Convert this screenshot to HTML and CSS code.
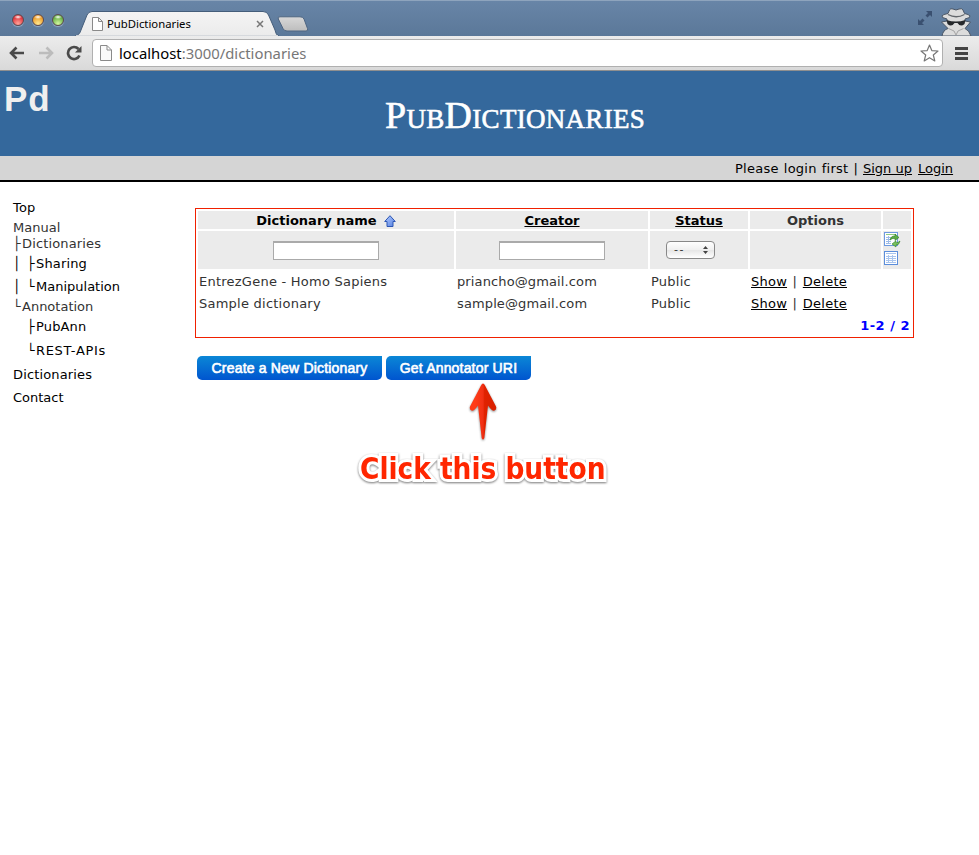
FILE: index.html
```html
<!DOCTYPE html>
<html lang="en">
<head>
<meta charset="utf-8">
<title>PubDictionaries</title>
<link rel="stylesheet" href="styles.css">
</head>
<body>
<div class="window">
  <div class="titlebar">
    <div class="lights"><i class="light red"></i><i class="light amber"></i><i class="light green"></i></div>
    <div class="tab">
      <svg class="tab-shape" width="204" height="25" viewBox="0 0 204 25">
        <defs><linearGradient id="tg" x1="0" y1="0" x2="0" y2="1"><stop offset="0" stop-color="#f4f4f4"/><stop offset="1" stop-color="#ebebeb"/></linearGradient></defs>
        <path d="M0 25C4 24 5 22 6 19L12 4Q13.500 .5 17 .5H188Q192 .5 193.500 4L200 19C201 22 201 24 204 25Z" fill="url(#tg)" stroke="#445d7a" stroke-width="1"/>
        <path d="M1 25H203" stroke="#ebebeb" stroke-width="1.500"/>
      </svg>
      <svg class="tab-page" width="11" height="14" viewBox="0 0 11 14"><path d="M.5.5H6.500L10.500 4.500V13.500H.5ZM6.500.5V4.500H10.500" fill="#fff" stroke="#8a8a8a"/></svg>
      <span class="tab-title">PubDictionaries</span>
      <svg class="tab-close" width="8" height="8" viewBox="0 0 8 8"><path d="M1 1L7 7M7 1L1 7" stroke="#777" stroke-width="1.500"/></svg>
    </div>
    <svg class="newtab" width="32" height="16" viewBox="0 0 32 16">
      <defs><linearGradient id="ng" x1="0" y1="0" x2="0" y2="1"><stop offset="0" stop-color="#d8d8d8"/><stop offset="1" stop-color="#bdbdbd"/></linearGradient></defs>
      <path d="M3 .8H23Q26 .8 27 3L30.500 12.500Q31.500 15 29 15H10Q7 15 6 12.500L1.300 3Q.5.8 3 .8Z" fill="url(#ng)" stroke="#4e6581"/>
    </svg>
    <div class="corner">
      <svg width="15" height="16" viewBox="0 0 15 16"><g fill="#3a5070"><path d="M8 1H14V7L12 5L9.500 7.500L7.500 5.500L10 3Z"/><path d="M0 9L2 11L4.500 8.500L6.500 10.500L4 13L6 15H0Z"/></g></svg>
      <svg class="spy" width="32" height="28" viewBox="0 0 32 28">
        <path d="M2 28Q3 22 8 20.500L1.500 14L7 13V11L2.500 9.500Q1 7.500 4 6.500L8 5.500L9.500 2Q10.500 0 13 1L16 2L19 1Q22 0 23 2L24.500 5.500L28 6.500Q31 7.500 29.500 9.500L25 11V13L30.500 14L25 20.500Q29 22 31 28Z" fill="#dcdcdc" stroke="#4a5666" stroke-width="1"/>
        <path d="M8 6.500Q16 11 24.500 6.500" fill="none" stroke="#63676c" stroke-width="1.300"/>
        <path d="M6.500 12Q16 15 25.500 12L24.500 16Q20.500 19.500 17.500 15H14.500Q11.500 19.500 7.500 16Z" fill="#25282b"/>
        <path d="M8.500 20.500L14 23L16 27L18 23L23.500 20.500" fill="none" stroke="#a4a4a4"/>
      </svg>
    </div>
  </div>
  <div class="toolbar">
    <svg class="back" width="16" height="14" viewBox="0 0 16 14"><path d="M7.500 1.500L2 7L7.500 12.500M2 7H15" fill="none" stroke="#4a4a4a" stroke-width="2.600"/></svg>
    <svg class="forward" width="16" height="14" viewBox="0 0 16 14"><path d="M8.500 1.500L14 7L8.500 12.500M14 7H1" fill="none" stroke="#bcbcbc" stroke-width="2.600"/></svg>
    <svg class="reload" width="16" height="16" viewBox="0 0 16 16"><path d="M12.500 4A6 6 0 1 0 13.500 10.500" fill="none" stroke="#4a4a4a" stroke-width="2.700"/><path d="M15.500 1V7.500H9Z" fill="#4a4a4a"/></svg>
    <div class="omnibox">
      <svg width="12" height="16" viewBox="0 0 12 16"><path d="M.5.5H7L11.500 5V15.500H.5ZM7 .5V5H11.500" fill="#fafafa" stroke="#8a8a8a"/></svg>
      <span class="url"><b>localhost</b>:3000/dictionaries</span>
      <svg class="star" width="19" height="18" viewBox="0 0 19 18"><path d="M9.500 1L11.800 6.600L18 7L13.300 11L14.800 16.900L9.500 13.700L4.200 16.900L5.700 11L1 7L7.200 6.600Z" fill="#fff" stroke="#777" stroke-width="1.200" stroke-linejoin="round"/></svg>
    </div>
    <svg class="menu" width="13" height="13" viewBox="0 0 13 13"><path d="M0 1.500H13M0 6.500H13M0 11.500H13" stroke="#444" stroke-width="2.800"/></svg>
  </div>
  <header class="banner">
    <span class="logo">Pd</span>
    <h1>PubDictionaries</h1>
  </header>
  <div class="loginbar"><span class="msg">Please login first |</span><a class="signup">Sign up</a><a class="login">Login</a></div>
  <div class="content">
    <ul class="nav">
      <li class="w2">Top</li>
      <li class="dim g4">Manual</li>
      <li class="dim w2"><i>├</i>Dictionaries</li>
      <li class="g4 w2"><i class="wide">│</i><i>├</i>Sharing</li>
      <li class="g7"><i class="wide">│</i><i>└</i>Manipulation</li>
      <li class="dim g4"><i>└</i>Annotation</li>
      <li class="g4 w2"><i class="wide"></i><i>├</i>PubAnn</li>
      <li class="g8 w6"><i class="wide"></i><i>└</i>REST-APIs</li>
      <li class="g8 w2">Dictionaries</li>
      <li class="g7">Contact</li>
    </ul>
    <main>
      <div class="frame">
      <table class="grid">
        <colgroup><col class="c1"><col class="c2"><col class="c3"><col class="c4"><col class="c5"></colgroup>
        <tr class="head">
          <th><span class="sorted">Dictionary name</span><svg class="up" width="12" height="12" viewBox="0 0 12 12"><defs><linearGradient id="ug" x1="0" y1="0" x2="1" y2="1"><stop offset="0" stop-color="#b4ccff"/><stop offset="1" stop-color="#5580e0"/></linearGradient></defs><path d="M6 .7L11.300 6.500H9V11.500H3V6.500H.7Z" fill="url(#ug)" stroke="#2c56b4" stroke-linejoin="round"/></svg></th>
          <th><a>Creator</a></th><th><a>Status</a></th><th>Options</th><th></th>
        </tr>
        <tr class="filter">
          <td><input type="text"></td>
          <td><input type="text"></td>
          <td><span class="select">--<svg width="5" height="8" viewBox="0 0 5 8"><path d="M0 3L2.500 0L5 3ZM0 5L2.500 8L5 5Z" fill="#444"/></svg></span></td>
          <td></td>
          <td><div class="tools">
            <svg width="17" height="16" viewBox="0 0 17 16"><rect x=".5" y=".5" width="13" height="13" fill="#fff" stroke="#6d9ae0"/><path d="M2 2.500H12" stroke="#8fca7e"/><path d="M2 5.500H9M2 7.500H7M2 9.500H7M2 11.500H7M4.500 4V12" stroke="#9dbbe8"/><path d="M6 8Q7 3.500 11 4V2L15 5.500L11 8.500V6.500Q8 6 6 8Z" fill="#5cab45" stroke="#2e7d27" stroke-width=".6"/><path d="M16 9Q15 13.500 12 13V15L8 12L12 8.800V10.800Q14 11 16 9Z" fill="#7ac15d" stroke="#2e7d27" stroke-width=".6"/></svg>
            <svg width="14" height="14" viewBox="0 0 14 14"><rect x=".5" y=".5" width="13" height="13" fill="#fff" stroke="#5c8edb"/><path d="M2 2.500H12" stroke="#a9c5ee"/><path d="M2 5.500H12M2 7.500H12M2 9.500H12M2 11.500H12M4.500 4V12M8.500 4V12" stroke="#a9c5ee"/></svg>
          </div></td>
        </tr>
        <tr><td>EntrezGene - Homo Sapiens</td><td class="mail">priancho@gmail.com</td><td>Public</td><td class="opts"><a>Show</a> | <a>Delete</a></td><td></td></tr>
        <tr><td>Sample dictionary</td><td class="mail">sample@gmail.com</td><td>Public</td><td class="opts"><a>Show</a> | <a>Delete</a></td><td></td></tr>
        <tr><td colspan="5" class="pager">1-2 / 2</td></tr>
      </table>
      </div>
      <div class="actions"><a class="btn create">Create a New Dictionary</a><a class="btn uri">Get Annotator URI</a></div>
      <div class="callout">
        <svg width="30" height="60" viewBox="0 0 30 60"><defs><linearGradient id="ag" x1="0" x2="1" y1="0" y2="0"><stop offset=".2" stop-color="#ff3c18"/><stop offset=".5" stop-color="#f03014"/><stop offset=".56" stop-color="#e02200"/><stop offset="1" stop-color="#d82000"/></linearGradient></defs><path d="M15 1.500Q16 1.500 17 3.500L28 24.500Q29 28 26 28.700Q24 29 20 23.500L16.300 56Q15 59 13.700 56L10 23.500Q6 29 4 28.700Q1 28 2 24.500L13 3.500Q14 1.500 15 1.500Z" fill="url(#ag)"/></svg>
        <p>Click this button</p>
      </div>
    </main>
  </div>
</div>
</body>
</html>
```
FILE: styles.css
```css
* { box-sizing: border-box; }
body { margin: 0; background: #fff; color: #333; font: 13px/16px Verdana, "DejaVu Sans", sans-serif; }
.window { width: 979px; height: 855px; overflow: hidden; }
.titlebar { height: 36px; display: flex; align-items: flex-end; background: linear-gradient(#6885a7, #5b7899); border-top: 1px solid #8ea4bd; }
.lights { display: flex; gap: 8px; padding: 0 0 10px 12px; width: 76px; }
.light { width: 12px; height: 12px; border-radius: 50%; border: 1px solid #5d4a50; box-shadow: 0 1px 1px #9bb0c8; }
.red { background: radial-gradient(ellipse 4px 2px at 50% 20%, #fff, transparent), radial-gradient(circle at 50% 85%, #ffa49a, #e0323a 70%); }
.amber { background: radial-gradient(ellipse 4px 2px at 50% 20%, #fff, transparent), radial-gradient(circle at 50% 85%, #ffe890, #eb9a25 70%); }
.green { background: radial-gradient(ellipse 4px 2px at 50% 20%, #fff, transparent), radial-gradient(circle at 50% 85%, #d4f7a0, #62ac40 70%); }
.tab { position: relative; width: 200px; height: 25px; display: flex; align-items: center; padding-left: 16px; }
.tab-shape { position: absolute; left: -1px; top: 0; }
.tab-page, .tab-title, .tab-close { position: relative; }
.tab-title { width: 148px; margin-left: 4px; flex: none; color: #000; font: 11.300px/14px "Noto Sans", sans-serif; }
.tab-close { margin-left: 1px; }
.newtab { margin: 0 0 4px 1px; }
.corner { margin-left: auto; display: flex; align-items: flex-end; gap: 7px; padding-right: 7px; }
.corner svg:first-child { margin-bottom: 10px; }
.toolbar { height: 35px; display: flex; align-items: center; padding: 0 11px 0 9px; background: linear-gradient(#ececec, #d9d9d9); border-bottom: 1px solid #8f8f8f; }
.forward { margin-left: 13px; }
.reload { margin-left: 12px; }
.omnibox { display: flex; align-items: center; width: 851px; height: 28px; margin-left: 10px; padding: 0 3px 0 7px; background: #fff; border: 1px solid #b0b0b0; border-radius: 4px; }
.url { margin-left: 7px; font: 14.850px/20px "Noto Sans", sans-serif; color: #777; }
.url b { font-weight: 400; color: #000; }
.star { margin-left: auto; }
.menu { margin-left: 12px; }
.banner { height: 85px; background: #34689c; color: #fff; }
.logo { float: left; width: 60px; padding: 8px 0 0 4px; color: #efefef; font: bold 35px/40px "Liberation Sans", sans-serif; letter-spacing: 1px; }
h1 { margin: 0; padding: 22px 0 0 385px; font: 38px/44px "Liberation Serif", serif; font-variant: small-caps; letter-spacing: .3px; white-space: nowrap; -webkit-text-stroke: .6px #fff; }
.loginbar { height: 26px; display: flex; padding: 5px 0 0 735px; background: #d5d5d5; border-bottom: 2px solid #000; color: #000; white-space: nowrap; }
.msg { width: 128px; letter-spacing: .25px; word-spacing: .7px; }
.signup { width: 50px; margin-right: 5px; }
a { color: #000; text-decoration: underline; }
.content { display: flex; }
.nav { width: 195px; margin: 0; padding: 18px 0 0 13px; list-style: none; color: #000; }
.nav li { height: 16px; display: flex; white-space: nowrap; }
.nav i { font-style: normal; width: 9px; letter-spacing: 0; }
.nav .wide { width: 14px; }
.nav .dim { color: #333; }
.nav .w2 { letter-spacing: .15px; }
.nav .w6 { letter-spacing: .65px; }
.nav .g4 { margin-top: 4px; }
.nav .g7 { margin-top: 7px; }
.nav .g8 { margin-top: 8px; }
main { padding-top: 26px; }
.frame { width: 719px; height: 130px; border: 1px solid #f02000; }
.grid { width: 717px; table-layout: fixed; border-spacing: 2px; white-space: nowrap; }
.c1 { width: 256px; } .c2 { width: 192px; } .c3 { width: 98px; } .c4 { width: 131px; } .c5 { width: 28px; }
td, th { padding: 2px 1px 0; height: 20px; line-height: 18px; letter-spacing: .24px; }
.mail { letter-spacing: .12px; }
.opts { word-spacing: 1.200px; }
.head th, .filter td { background: #ebebeb; text-align: center; padding: 0; }
.head th { height: 18px; padding-top: 1px; line-height: 17px; letter-spacing: 0; }
.sorted { color: #000; }
.up { margin-left: 7px; vertical-align: -2px; }
.filter td { height: 38px; line-height: 0; }
input { display: inline-block; vertical-align: top; width: 106px; height: 19px; margin: 0; padding: 0; border: 1px solid #aaa; border-top: 2px solid #aaa; background: #fff; }
.select { display: inline-flex; justify-content: space-between; align-items: center; width: 49px; height: 18px; margin-right: 17px; padding: 0 6px 0 7px; border: 1px solid #888; border-radius: 4px; background: linear-gradient(#fff, #f0f0f0 50%, #e6e6e6 51%, #fff); font: 11px/14px "DejaVu Sans", sans-serif; letter-spacing: 1.500px; }
.tools { display: flex; flex-direction: column; gap: 3px; padding: 1px 0 0 1px; height: 38px; }
.grid .pager { color: #00f; font-weight: bold; text-align: right; letter-spacing: .5px; }
.actions { display: flex; gap: 4px; padding: 18px 0 0 2px; }
.btn { height: 24px; border-radius: 5px 0 5px 5px; background: linear-gradient(#0b87d6, #0055cf); color: #fff; text-decoration: none; text-align: center; font: 14px/24px "Liberation Sans", sans-serif; letter-spacing: .18px; -webkit-text-stroke: .6px #fff; }
.btn.create { width: 185px; }
.btn.uri { width: 145px; }
.callout { padding-left: 163px; }
.callout svg { display: block; margin: 2px 0 0 110px; filter: drop-shadow(0 1px 1px #888); }
.callout p { margin: 7px 0 0 2px; font: bold condensed 29.400px/40px "DejaVu Sans Condensed", "DejaVu Sans", sans-serif; color: #ff2600; -webkit-text-stroke: 6px #fff; stroke-linejoin: round; paint-order: stroke fill; filter: drop-shadow(0 1px 1px #777); white-space: nowrap; }
```
